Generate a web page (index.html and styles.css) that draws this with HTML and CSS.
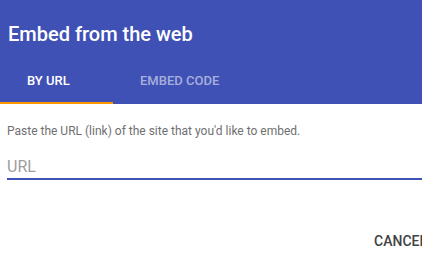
FILE: index.html
```html
<!DOCTYPE html>
<html lang="en">
<head>
<meta charset="utf-8">
<title>Embed from the web</title>
<link rel="stylesheet" href="styles.css">
</head>
<body>
<div class="dialog">
  <header class="header">
    <h1 class="title">Embed from the web</h1>
    <nav class="tabs">
      <div class="tab tab-active">BY URL</div>
      <div class="tab">EMBED CODE</div>
    </nav>
  </header>
  <main class="content">
    <p class="hint">Paste the URL (link) of the site that you'd like to embed.</p>
    <input class="url-input" type="text" placeholder="URL">
  </main>
  <footer class="actions">
    <button class="btn" type="button">CANCEL</button>
  </footer>
</div>
</body>
</html>
```

FILE: styles.css
```css
html, body {
  margin: 0;
  padding: 0;
  overflow: hidden;
  background: #ffffff;
}

body {
  width: 422px;
  height: 272px;
  font-family: Roboto, "Liberation Sans", sans-serif;
}

.dialog {
  width: 448px;
}

.header {
  background: #3f51b5;
  display: flex;
  flex-direction: column;
}

.title {
  margin: 0;
  padding: 20px 8px 8px 8px;
  font-size: 20px;
  line-height: 28px;
  font-weight: 500;
  color: #ffffff;
}

.tabs {
  display: flex;
  height: 48px;
}

.tab {
  width: 113px;
  box-sizing: border-box;
  padding-left: 27px;
  display: flex;
  align-items: center;
  font-size: 13px;
  font-weight: 500;
  color: rgba(255, 255, 255, 0.55);
  border-bottom: 2px solid transparent;
  padding-top: 2px;
}

.tab-active {
  color: #ffffff;
  border-bottom-color: #ff9800;
}

.content {
  padding: 19px 11px 0 7px;
  display: flex;
  flex-direction: column;
}

.hint {
  margin: 0;
  font-size: 12px;
  line-height: 16px;
  color: #707070;
}

.url-input {
  margin-top: 15px;
  height: 26px;
  box-sizing: border-box;
  padding: 0;
  border: none;
  border-bottom: 2px solid #3f51b5;
  outline: none;
  font-family: Roboto, "Liberation Sans", sans-serif;
  font-size: 16px;
  color: #212121;
  background: transparent;
}

.url-input::placeholder {
  color: #9e9e9e;
}

.actions {
  display: flex;
  justify-content: flex-end;
  padding: 43px 13px 0 0;
}

.btn {
  height: 36px;
  padding: 0 8px;
  border: none;
  background: transparent;
  font-family: Roboto, "Liberation Sans", sans-serif;
  font-size: 14px;
  font-weight: 500;
  color: #424242;
}
```
